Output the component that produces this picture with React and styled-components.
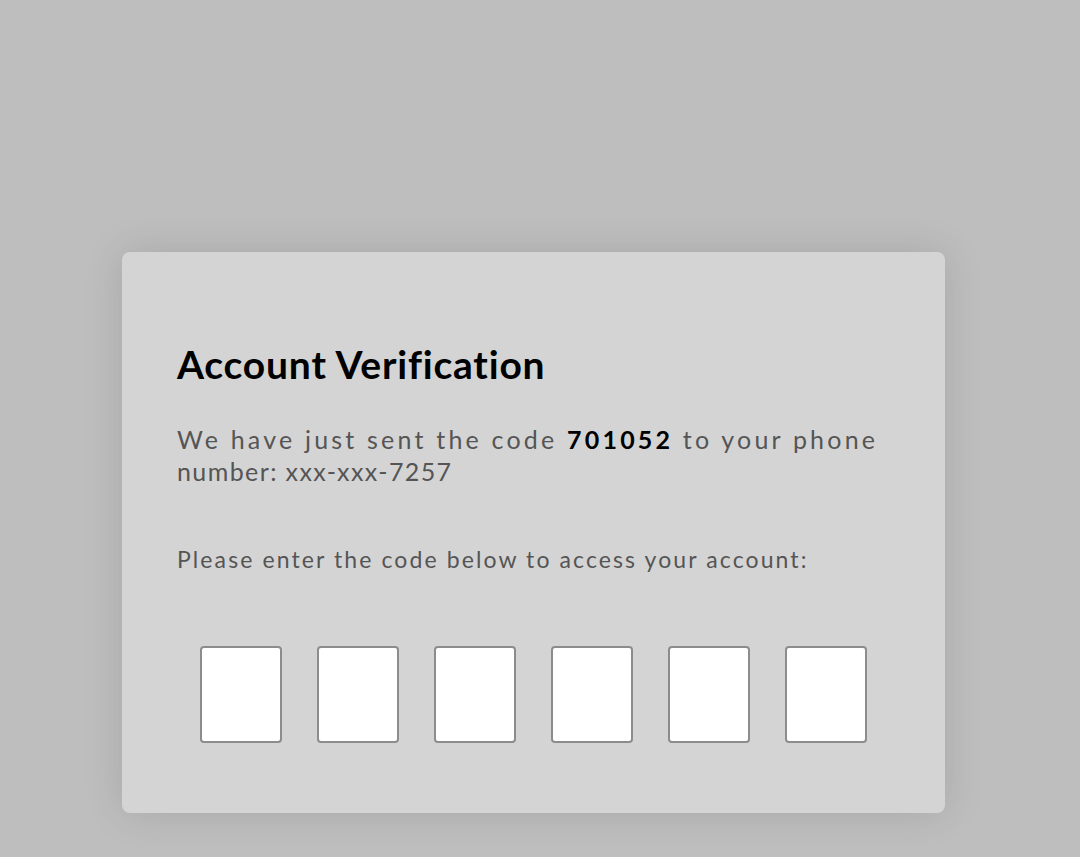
import styled, { createGlobalStyle } from 'styled-components';

const GlobalStyle = createGlobalStyle`
  html, body {
    margin: 0;
    padding: 0;
    background: #bebebe;
  }
  body {
    font-family: Lato, "Open Sans", sans-serif;
    font-variant-ligatures: none;
  }
`;

const Page = styled.div`
  min-height: 857px;
  padding: 252px 0 0 122px;
  box-sizing: border-box;
`;

const Card = styled.div`
  width: 823px;
  height: 561px;
  box-sizing: border-box;
  background: #d4d4d4;
  border-radius: 8px;
  box-shadow: 0 0 40px rgba(0, 0, 0, 0.12);
  padding: 87px 55px 0;
  display: flex;
  flex-direction: column;
`;

const Title = styled.h1`
  margin: 0;
  font-size: 39px;
  font-weight: 700;
  letter-spacing: 0.8px;
  color: #000;
  line-height: 50px;
`;

const Text = styled.p`
  margin: ${p => p.$top}px 0 0;
  font-size: ${p => p.$size}px;
  line-height: ${p => p.$lh}px;
  letter-spacing: ${p => p.$ls}px;
  color: #555;
`;

const Line = styled.span`
  display: block;
  letter-spacing: ${p => p.$ls}px;
`;

const Code = styled.b`
  color: #000;
  font-weight: 700;
`;

const Boxes = styled.div`
  display: flex;
  justify-content: center;
  gap: 35px;
  margin-top: 72px;
`;

const Box = styled.input`
  width: 82px;
  height: 97px;
  box-sizing: border-box;
  border: 2px solid #8c8c8c;
  border-radius: 4px;
  background: #fff;
  padding: 0;
  font-size: 40px;
  text-align: center;
  font-family: inherit;
  outline: none;
`;

export default function App() {
  return (
    <>
      <GlobalStyle />
      <Page>
        <Card>
          <Title>Account Verification</Title>
          <Text $top={34} $size={25} $lh={32} $ls={3.2}>
            <Line $ls={3.2}>We have just sent the code <Code>701052</Code> to your phone</Line>
            <Line $ls={1.4}>number: xxx-xxx-7257</Line>
          </Text>
          <Text $top={57} $size={23} $lh={30} $ls={2.1}>
            Please enter the code below to access your account:
          </Text>
          <Boxes>
            {[0, 1, 2, 3, 4, 5].map(i => (
              <Box key={i} type="text" maxLength={1} />
            ))}
          </Boxes>
        </Card>
      </Page>
    </>
  );
}
